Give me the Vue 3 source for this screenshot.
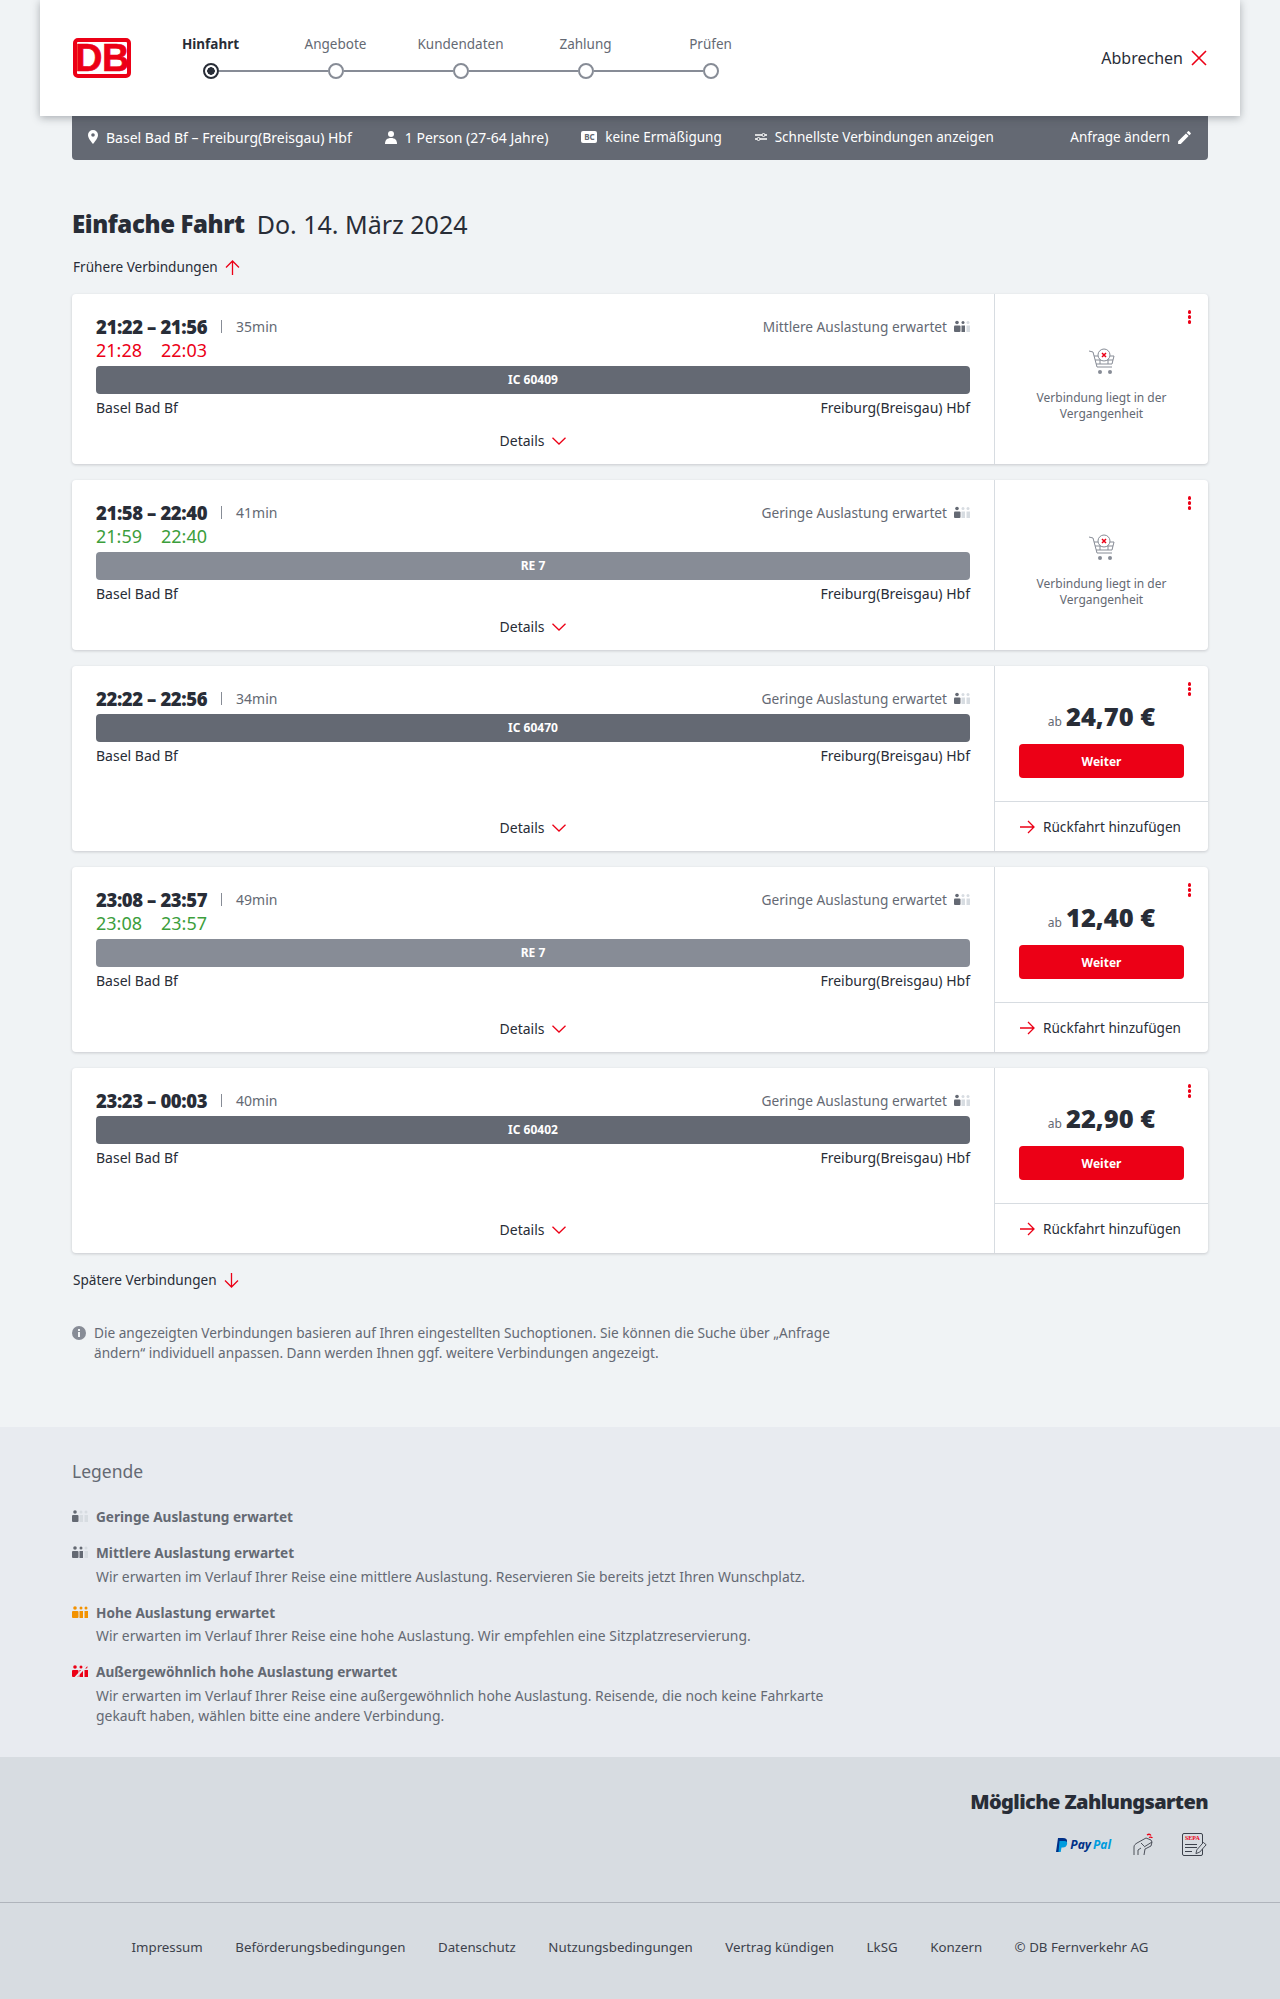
<script setup>
const steps = ['Hinfahrt', 'Angebote', 'Kundendaten', 'Zahlung', 'Prüfen']

const trips = [
  { time: '21:22 – 21:56', dur: '35min', load: 'Mittlere Auslastung erwartet', level: 2, train: 'IC 60409', dark: true, actual: ['21:28', '22:03'], late: true, past: true },
  { time: '21:58 – 22:40', dur: '41min', load: 'Geringe Auslastung erwartet', level: 1, train: 'RE 7', dark: false, actual: ['21:59', '22:40'], late: false, past: true },
  { time: '22:22 – 22:56', dur: '34min', load: 'Geringe Auslastung erwartet', level: 1, train: 'IC 60470', dark: true, price: '24,70 €' },
  { time: '23:08 – 23:57', dur: '49min', load: 'Geringe Auslastung erwartet', level: 1, train: 'RE 7', dark: false, actual: ['23:08', '23:57'], late: false, price: '12,40 €' },
  { time: '23:23 – 00:03', dur: '40min', load: 'Geringe Auslastung erwartet', level: 1, train: 'IC 60402', dark: true, price: '22,90 €' },
]

const legend = [
  { title: 'Geringe Auslastung erwartet', level: 1, color: '#646973' },
  { title: 'Mittlere Auslastung erwartet', level: 2, color: '#646973', text: ['Wir erwarten im Verlauf Ihrer Reise eine mittlere Auslastung. Reservieren Sie bereits jetzt Ihren Wunschplatz.'] },
  { title: 'Hohe Auslastung erwartet', level: 3, color: '#f39200', text: ['Wir erwarten im Verlauf Ihrer Reise eine hohe Auslastung. Wir empfehlen eine Sitzplatzreservierung.'] },
  { title: 'Außergewöhnlich hohe Auslastung erwartet', level: 3, color: '#ec0016', slash: true, text: ['Wir erwarten im Verlauf Ihrer Reise eine außergewöhnlich hohe Auslastung. Reisende, die noch keine Fahrkarte', 'gekauft haben, wählen bitte eine andere Verbindung.'] },
]

const links = ['Impressum', 'Beförderungsbedingungen', 'Datenschutz', 'Nutzungsbedingungen', 'Vertrag kündigen', 'LkSG', 'Konzern', '© DB Fernverkehr AG']
</script>

<template>
  <div class="page">
    <header class="head">
      <div class="logo"><span>DB</span></div>
      <div class="steps">
        <span v-for="(s, i) in steps" :key="s" class="step-label" :class="{ current: i === 0 }">{{ s }}</span>
        <div class="track">
          <template v-for="(s, i) in steps" :key="s">
            <i class="node" :class="{ active: i === 0 }"></i>
            <i v-if="i < steps.length - 1" class="link"></i>
          </template>
        </div>
      </div>
      <div class="cancel">
        Abbrechen
        <svg width="16" height="16" viewBox="0 0 16 16"><path d="M1 1l14 14M15 1L1 15" fill="none" stroke="#ec0016" stroke-width="1.6"/></svg>
      </div>
    </header>

    <div class="query">
      <span class="q-item">
        <svg width="10" height="14" viewBox="0 0 10 14"><path fill-rule="evenodd" d="M5 0a5 5 0 0 1 5 5c0 3.4-3.4 6.9-5 9-1.600-2.100-5-5.600-5-9a5 5 0 0 1 5-5zm0 3.200a1.800 1.800 0 1 0 0 3.600 1.800 1.800 0 0 0 0-3.600z" fill="#fff"/></svg>
        Basel Bad Bf – Freiburg(Breisgau) Hbf
      </span>
      <span class="q-item">
        <svg width="12" height="13" viewBox="0 0 12 13"><circle cx="6" cy="3" r="3" fill="#fff"/><path d="M0 13c0-4 2-6 6-6s6 2 6 6z" fill="#fff"/></svg>
        1 Person (27-64 Jahre)
      </span>
      <span class="q-item narrow">
        <span class="bc">BC</span>
        keine Ermäßigung
      </span>
      <span class="q-item narrow">
        <svg width="12" height="10" viewBox="0 0 12 10"><path d="M0 3h7M10 3h2M0 7h2M5 7h7" stroke="#fff" stroke-width="1.400" fill="none"/><circle cx="8.500" cy="3" r="1.500" fill="none" stroke="#fff"/><circle cx="3.500" cy="7" r="1.500" fill="none" stroke="#fff"/></svg>
        Schnellste Verbindungen anzeigen
      </span>
      <span class="q-edit">
        Anfrage ändern
        <svg width="17" height="17" viewBox="0 0 24 24"><path d="M3 17.250V21h3.750L17.810 9.940l-3.750-3.750L3 17.250zM20.710 7.040a1 1 0 0 0 0-1.410l-2.340-2.340a1 1 0 0 0-1.410 0l-1.830 1.830 3.750 3.750 1.830-1.830z" fill="#fff"/></svg>
      </span>
    </div>

    <main class="main">
      <h1 class="title"><b>Einfache Fahrt</b><span>Do. 14. März 2024</span></h1>

      <div class="more first">
        Frühere Verbindungen
        <svg width="15" height="15" viewBox="0 0 15 15"><path d="M7.500 15V1M1 7.500L7.500 1 14 7.500" fill="none" stroke="#ec0016" stroke-width="1.300"/></svg>
      </div>

      <section class="list">
        <article v-for="t in trips" :key="t.time" class="card">
          <div class="c-left">
            <div class="c-top">
              <b class="time">{{ t.time }}</b>
              <i class="sep"></i>
              <span class="dur">{{ t.dur }}</span>
              <span class="load">{{ t.load }}</span>
              <svg class="occ" width="16" height="12" viewBox="0 0 16 12">
                <g :fill="t.level >= 1 ? '#646973' : '#d7dce1'"><circle cx="3" cy="2.500" r="1.800"/><rect x="0" y="5.500" width="6.500" height="6.500" rx="1"/></g>
                <g :fill="t.level >= 2 ? '#646973' : '#d7dce1'"><circle cx="9" cy="2.500" r="1.500"/><rect x="7.500" y="5.500" width="3.500" height="6.500"/></g>
                <g fill="#d7dce1"><circle cx="14" cy="2.500" r="1.500"/><rect x="12.500" y="5.500" width="3.500" height="6.500"/></g>
              </svg>
            </div>
            <div v-if="t.actual" class="actual" :class="t.late ? 'late' : 'ontime'">
              <span>{{ t.actual[0] }}</span><span>{{ t.actual[1] }}</span>
            </div>
            <div class="bar" :class="{ dark: t.dark }">{{ t.train }}</div>
            <div class="stations"><span>Basel Bad Bf</span><span>Freiburg(Breisgau) Hbf</span></div>
            <div class="details">
              Details
              <svg width="14" height="8" viewBox="0 0 14 8"><path d="M.5.700L7 7 13.500.700" fill="none" stroke="#ec0016" stroke-width="1.300"/></svg>
            </div>
          </div>
          <div class="c-right">
            <i class="dots"></i>
            <div v-if="t.past" class="past">
              <svg width="28" height="28" viewBox="0 0 28 28">
                <g fill="none" stroke="#878c96" stroke-width="1">
                  <path d="M1 3l4 1 4 15h15"/>
                  <path d="M6 8h4M21 8h5l-2 8H8M7 12h18M12 8v8M20 8v8"/>
                  <circle cx="16" cy="7" r="6" fill="#fff"/>
                </g>
                <path d="M14 5l4 4M18 5l-4 4" stroke="#ec0016" stroke-width="1.500"/>
                <circle cx="12" cy="24" r="2" fill="#878c96"/><circle cx="22" cy="24" r="2" fill="#878c96"/>
              </svg>
              <p>Verbindung liegt in der<br>Vergangenheit</p>
            </div>
            <template v-else>
              <div class="offer">
                <div class="price"><small>ab</small><b>{{ t.price }}</b></div>
                <button class="go">Weiter</button>
              </div>
              <div class="back">
                <svg width="15" height="14" viewBox="0 0 15 14"><path d="M0 7h14M8 1l6 6-6 6" fill="none" stroke="#ec0016" stroke-width="1.300"/></svg>
                Rückfahrt hinzufügen
              </div>
            </template>
          </div>
        </article>
      </section>

      <div class="more last">
        Spätere Verbindungen
        <svg width="15" height="15" viewBox="0 0 15 15"><path d="M7.500 0v14M1 7.500L7.500 14 14 7.500" fill="none" stroke="#ec0016" stroke-width="1.300"/></svg>
      </div>

      <div class="info">
        <svg width="14" height="14" viewBox="0 0 14 14"><circle cx="7" cy="7" r="7" fill="#878c96"/><rect x="6" y="6" width="2" height="5" fill="#f0f3f5"/><rect x="6" y="3" width="2" height="2" fill="#f0f3f5"/></svg>
        <p>Die angezeigten Verbindungen basieren auf Ihren eingestellten Suchoptionen. Sie können die Suche über „Anfrage<br>ändern“ individuell anpassen. Dann werden Ihnen ggf. weitere Verbindungen angezeigt.</p>
      </div>
    </main>

    <section class="legend">
      <h2>Legende</h2>
      <div v-for="l in legend" :key="l.title" class="l-item">
        <svg width="16" height="12" viewBox="0 0 16 12">
          <g :fill="l.color"><circle cx="3" cy="2" r="1.800"/><rect x="0" y="5" width="6.500" height="7" rx="1"/></g>
          <g :fill="l.level >= 2 ? l.color : '#d7dce1'"><circle cx="9" cy="2" r="1.500"/><rect x="7.500" y="5" width="3.500" height="7"/></g>
          <g :fill="l.level >= 3 ? l.color : '#d7dce1'"><circle cx="14" cy="2" r="1.500"/><rect x="12.500" y="5" width="3.500" height="7"/></g>
          <path v-if="l.slash" d="M3 13L15 0" stroke="#e8ebf0" stroke-width="2"/>
        </svg>
        <div>
          <b>{{ l.title }}</b>
          <p v-for="line in l.text" :key="line">{{ line }}</p>
        </div>
      </div>
    </section>

    <footer class="foot">
      <div class="pay">
        <h2>Mögliche Zahlungsarten</h2>
        <div class="pay-icons">
          <span class="paypal">
            <svg width="12" height="14" viewBox="0 0 12 14"><path d="M2 0h5c3 0 4.500 1.500 4 4-.5 3-2.500 4-5 4H4.500L3.500 14H0z" fill="#003087"/><path d="M3.500 3h5c2 0 3 1 2.600 3-.5 2.500-2.100 3.500-4.100 3.500H5.500L4.700 14H2.500z" fill="#009cde"/></svg>
            <b>Pay</b><b class="pal">Pal</b>
          </span>
          <svg class="tap" width="22" height="23" viewBox="0 0 22 23">
            <g fill="none" stroke="#3c414b" stroke-width=".9">
              <path d="M1 22v-8c0-2 1.500-3 3-4l9-5 5 2 1 2-8 5"/>
              <path d="M5 22v-5l3-2M11 22l1-6 6-3 1-4M8 10l3 3"/>
            </g>
            <path d="M14 2c1.500-1 3-1 4 .5M16 4.500c1-.7 2-.7 3.500.3" fill="none" stroke="#ec0016" stroke-width="1.300"/>
          </svg>
          <span class="sepa">
            <b>SEPA</b>
            <i></i><i></i><i class="short"></i>
            <svg width="13" height="14" viewBox="0 0 14 14"><path d="M1 13l1-4 7-8 3 2.500-7 8z" fill="#d7dce1" stroke="#3c414b"/></svg>
          </span>
        </div>
      </div>
      <nav class="links"><a v-for="l in links" :key="l">{{ l }}</a></nav>
    </footer>
  </div>
</template>

<style>
body {
  background: #f0f3f5;
}
</style>

<style scoped>
.page {
  width: 1280px;
  height: 1999px;
  display: flex;
  flex-direction: column;
  font-family: "Noto Sans", sans-serif;
  font-size: 14px;
  color: #282d37;
  background: #f0f3f5;
}

.head {
  width: 1200px;
  height: 116px;
  margin: 0 auto;
  padding: 0 33px;
  box-sizing: border-box;
  display: flex;
  align-items: center;
  background: #fff;
  box-shadow: 0 2px 8px rgba(40, 45, 55, 0.35);
  position: relative;
  z-index: 2;
}

.logo {
  width: 58px;
  height: 40px;
  box-sizing: border-box;
  border: 4px solid #ec0016;
  border-radius: 5px;
  display: flex;
  align-items: center;
  justify-content: center;
}

.logo span {
  font-family: "Liberation Sans Narrow", "Liberation Sans", sans-serif;
  font-weight: 700;
  font-size: 38px;
  line-height: 32px;
  color: #ec0016;
  letter-spacing: -0.5px;
  -webkit-text-stroke: 0.6px #ec0016;
}

.steps {
  margin-left: 17px;
  margin-bottom: 3px;
  display: grid;
  grid-template-columns: repeat(5, 125px);
  row-gap: 9px;
  justify-items: center;
}

.step-label {
  font-size: 13.5px;
  line-height: 20px;
  color: #646973;
}

.step-label.current {
  font-weight: 700;
  color: #282d37;
}

.track {
  grid-column: 1 / -1;
  width: 516px;
  display: flex;
  align-items: center;
}

.node {
  width: 16px;
  height: 16px;
  box-sizing: border-box;
  border: 2px solid #878c96;
  border-radius: 50%;
  background: #fff;
  flex: none;
}

.node.active {
  border-color: #282d37;
  background: radial-gradient(circle, #282d37 0 3.500px, #fff 4px);
}

.link {
  flex: 1;
  height: 2px;
  background: #878c96;
}

.cancel {
  margin-left: auto;
  display: flex;
  align-items: center;
  gap: 8px;
  font-size: 16px;
  color: #282d37;
}

.query {
  width: 1136px;
  height: 44px;
  margin: 0 auto;
  padding: 0 15px 2px 16px;
  box-sizing: border-box;
  display: flex;
  align-items: center;
  gap: 33px;
  background: #646973;
  border-radius: 0 0 4px 4px;
  color: #fff;
  font-size: 14px;
}

.q-item,
.q-edit {
  display: flex;
  align-items: center;
  gap: 8px;
}

.q-item.narrow {
  font-size: 13.5px;
}

.q-edit {
  margin-left: auto;
  font-size: 13.5px;
  gap: 6px;
}

.bc {
  width: 16px;
  height: 12px;
  border-radius: 2px;
  background: #fff;
  color: #646973;
  font-size: 8px;
  font-weight: 700;
  line-height: 12px;
  text-align: center;
}

.main {
  width: 1136px;
  margin: 0 auto;
  flex: 1;
}

.title {
  margin: 48px 0 0;
  font-size: 25px;
  line-height: 32px;
  font-weight: 400;
  display: flex;
  gap: 12px;
}

.title b {
  font-size: 24px;
  font-weight: 900;
  letter-spacing: -0.4px;
}

.more {
  display: flex;
  align-items: center;
  gap: 7px;
  font-size: 13.6px;
  line-height: 20px;
  padding-left: 1px;
}

.more.first {
  margin: 17px 0 17px;
}

.more.last {
  margin-top: 17px;
}

.list {
  display: flex;
  flex-direction: column;
  gap: 16px;
}

.card {
  display: flex;
  min-height: 170px;
  background: #fff;
  border-radius: 4px;
  box-shadow: 0 1px 3px rgba(40, 45, 55, 0.2);
}

.c-left {
  flex: 1;
  padding: 20px 24px 13px;
  display: flex;
  flex-direction: column;
  border-right: 1px solid #d7dce1;
}

.c-top {
  display: flex;
  align-items: center;
  height: 24px;
}

.time {
  font-size: 18.5px;
  font-weight: 900;
  letter-spacing: -0.4px;
}

.sep {
  width: 1px;
  height: 13px;
  margin: 0 14px;
  background: #878c96;
}

.dur {
  color: #646973;
  font-size: 14px;
}

.load {
  margin-left: auto;
  margin-right: 7px;
  color: #646973;
  font-size: 13.7px;
}

.actual {
  display: flex;
  gap: 19px;
  font-size: 18px;
  line-height: 24px;
  height: 24px;
}

.late {
  color: #ec0016;
}

.ontime {
  color: #3c9e3c;
}

.bar {
  height: 28px;
  margin-top: 4px;
  border-radius: 4px;
  background: #878c96;
  color: #fff;
  font-size: 12px;
  font-weight: 700;
  line-height: 28px;
  text-align: center;
}

.bar.dark {
  background: #646973;
}

.stations {
  display: flex;
  justify-content: space-between;
  margin-top: 4px;
  line-height: 20px;
  font-size: 14px;
}

.details {
  margin-top: auto;
  display: flex;
  align-items: center;
  justify-content: center;
  gap: 8px;
  line-height: 20px;
}

.c-right {
  width: 213px;
  flex: none;
  display: flex;
  flex-direction: column;
  position: relative;
}

.dots {
  position: absolute;
  top: 16px;
  right: 17px;
  width: 3.500px;
  height: 3.500px;
  border-radius: 50%;
  background: #ec0016;
  box-shadow: 0 5px #ec0016, 0 10px #ec0016;
}

.past {
  margin-top: 54px;
  text-align: center;
  color: #646973;
  font-size: 12px;
  line-height: 16px;
}

.past svg {
  display: block;
  margin: 0 auto;
}

.past p {
  margin: 14px 0 0;
}

.offer {
  height: 136px;
  padding: 0 24px;
  box-sizing: border-box;
  border-bottom: 1px solid #d7dce1;
}

.price {
  margin-top: 32px;
  display: flex;
  justify-content: center;
  align-items: baseline;
  gap: 4px;
  height: 36px;
}

.price small {
  font-size: 12px;
  color: #646973;
}

.price b {
  font-size: 25.5px;
  font-weight: 900;
  line-height: 36px;
}

.go {
  display: block;
  width: 165px;
  height: 34px;
  margin: 10px 0 0;
  border: 0;
  border-radius: 4px;
  background: #ec0016;
  color: #fff;
  font-family: inherit;
  font-size: 12px;
  font-weight: 700;
}

.back {
  height: 49px;
  flex: none;
  display: flex;
  align-items: center;
  gap: 8px;
  padding-left: 25px;
  font-size: 13.6px;
}

.info {
  display: flex;
  gap: 8px;
  margin-top: 33px;
  color: #646973;
}

.info svg {
  flex: none;
  margin-top: 3px;
}

.info p {
  margin: 0;
  line-height: 20px;
  font-size: 13.65px;
  white-space: nowrap;
}

.legend {
  height: 330px;
  padding: 31px 72px 0;
  box-sizing: border-box;
  background: #e8ebf0;
  color: #646973;
  font-size: 13.9px;
}

.legend h2 {
  margin: 0 0 22px;
  font-size: 17.5px;
  line-height: 26px;
  font-weight: 400;
}

.l-item {
  display: flex;
  gap: 8px;
  margin-bottom: 15px;
  line-height: 20px;
}

.l-item svg {
  flex: none;
  margin-top: 4px;
}

.l-item b {
  display: block;
  font-size: 13.6px;
  line-height: 21px;
}

.l-item p {
  margin: 3.5px 0 0;
  white-space: nowrap;
}

.l-item p + p {
  margin-top: 0;
}

.foot {
  height: 242px;
  background: #d7dce1;
}

.pay {
  height: 146px;
  padding: 29px 72px 0;
  box-sizing: border-box;
  border-bottom: 1px solid #afb4bb;
  text-align: right;
}

.pay h2 {
  margin: 0;
  font-size: 20px;
  line-height: 32px;
  font-weight: 900;
  letter-spacing: -0.6px;
}

.pay-icons {
  display: flex;
  justify-content: flex-end;
  align-items: center;
  gap: 22px;
  margin-top: 15px;
}

.paypal {
  display: flex;
  align-items: center;
  gap: 2px;
  font-size: 12px;
  font-style: italic;
  color: #003087;
}

.pal {
  color: #009cde;
}

.tap {
  margin-right: 5px;
}

.sepa {
  width: 21px;
  height: 23px;
  margin-right: 5px;
  box-sizing: border-box;
  border: 1px solid #3c414b;
  border-radius: 2px;
  display: flex;
  flex-direction: column;
  align-items: flex-start;
  gap: 2px;
  padding: 1px 2px;
  position: relative;
}

.sepa b {
  font-family: "Liberation Serif", serif;
  font-size: 6px;
  line-height: 7px;
  color: #ec0016;
}

.sepa i {
  width: 12px;
  height: 1px;
  background: #3c414b;
}

.sepa i.short {
  width: 7px;
  margin-top: 1px;
}

.sepa svg {
  position: absolute;
  right: -6px;
  bottom: 0;
}

.links {
  display: flex;
  justify-content: center;
  gap: 32.500px;
  margin-top: 34px;
  font-size: 13.3px;
  line-height: 20px;
  color: #3c414b;
}
</style>
